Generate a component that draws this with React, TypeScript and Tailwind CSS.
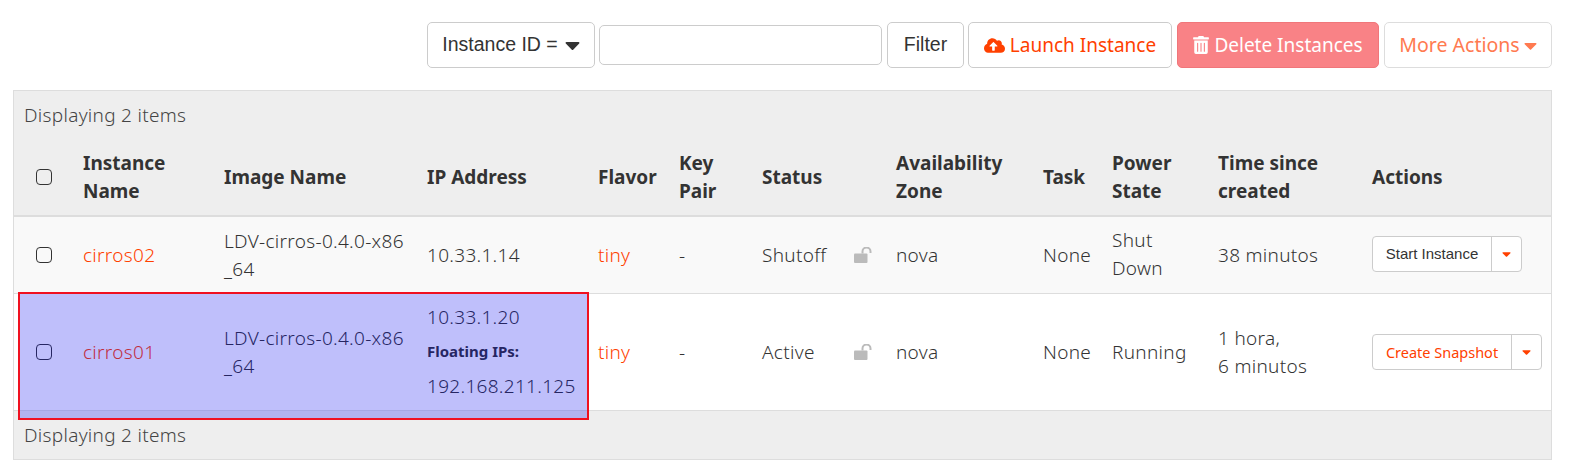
import React from 'react';
import { FaCaretDown, FaCloudUploadAlt, FaTrashAlt } from 'react-icons/fa';

const ubuntu = "font-['Noto_Sans',sans-serif]";
const arial = "font-['Liberation_Sans',sans-serif]";

const th = 'px-[10px] py-0 text-left align-middle font-bold text-[19px] leading-[28px] text-[#333]';
const td = 'px-[10px] py-0 align-middle text-[19px] font-light tracking-[0.3px] leading-[28px] border-t border-[#ddd]';

function Check() {
  return <span className="ml-[12px] block h-[16px] w-[16px] rounded-[4px] border-[1.5px] border-[#333]" />;
}

function Lock() {
  return (
    <svg viewBox="0 0 19 16" className="mr-[3px] h-[16px] w-[19px] text-[#bbb]">
      <rect x="0" y="6.5" width="13.5" height="9.5" rx="1" fill="currentColor" />
      <path d="M8.5 6.5V4.5a4 4 0 0 1 8 0V6" fill="none" stroke="currentColor" strokeWidth="2" />
    </svg>
  );
}

function Toolbar() {
  return (
    <div className="flex justify-end items-center pt-[22px] pr-[19px] h-[68px]">
      <button className={`${arial} flex items-center justify-center gap-[7px] w-[168px] h-[46px] rounded-[5px] border border-[#ccc] bg-white text-[19.5px] text-[#333]`}>
        Instance ID = <FaCaretDown className="h-[24px] w-[15px]" />
      </button>
      <div className="ml-[4px] w-[283px] h-[40px] rounded-[5px] border border-[#ccc] bg-white" />
      <button className={`${arial} ml-[5px] w-[77px] h-[46px] rounded-[5px] border border-[#ccc] bg-white text-[19.5px] text-[#333]`}>Filter</button>
      <button className={`${ubuntu} ml-[4px] flex items-center justify-center gap-[5px] w-[204px] h-[46px] rounded-[5px] border border-[#ccc] bg-white text-[19px] text-[#ff4000]`}>
        <FaCloudUploadAlt className="h-[19px] w-[21px]" /> Launch Instance
      </button>
      <button className={`${ubuntu} ml-[5px] flex items-center justify-center gap-[5px] w-[202px] h-[46px] rounded-[5px] border border-[#f0767a] bg-[#f98286] text-[19px] text-white`}>
        <FaTrashAlt className="h-[18px] w-[16px]" /> Delete Instances
      </button>
      <button className={`${ubuntu} ml-[5px] flex items-center justify-center gap-[4px] w-[168px] h-[46px] rounded-[5px] border border-[#ddd] bg-white text-[19.5px] text-[#ff7a50]`}>
        More Actions <FaCaretDown className="h-[21px] w-[13px]" />
      </button>
    </div>
  );
}

function ActionButton({ label, color, width, font }: { label: string; color: string; width: string; font: string }) {
  return (
    <div className={`flex h-[36px] ${width} rounded-[4px] border border-[#ccc] bg-white tracking-normal font-normal`}>
      <span className={`flex flex-1 items-center justify-center whitespace-nowrap ${font} ${color}`}>{label}</span>
      <span className="flex w-[30px] items-center justify-center border-l border-[#ccc] text-[#ff4000]">
        <FaCaretDown className="h-[14px] w-[11px]" />
      </span>
    </div>
  );
}

export default function App() {
  return (
    <div className={`${ubuntu} relative h-[473px] w-[1571px] overflow-hidden bg-white text-[#333]`}>
      <Toolbar />
      <div className="ml-[13px] mt-[22px] w-[1539px] border border-[#ddd]">
        <table className="w-full table-fixed border-collapse">
          <colgroup>
            <col className="w-[59px]" />
            <col className="w-[141px]" />
            <col className="w-[203px]" />
            <col className="w-[171px]" />
            <col className="w-[81px]" />
            <col className="w-[83px]" />
            <col className="w-[134px]" />
            <col className="w-[147px]" />
            <col className="w-[69px]" />
            <col className="w-[106px]" />
            <col className="w-[154px]" />
            <col />
          </colgroup>
          <thead className="bg-[#eee]">
            <tr className="h-[48px]">
              <td colSpan={12} className="px-[10px] text-[19px] tracking-[0.3px] text-[#444] font-light align-middle">Displaying 2 items</td>
            </tr>
            <tr className="h-[77px] border-b-[2px] border-[#ddd]">
              <th className={th}><Check /></th>
              <th className={th}>Instance Name</th>
              <th className={th}>Image Name</th>
              <th className={th}>IP Address</th>
              <th className={th}>Flavor</th>
              <th className={th}>Key Pair</th>
              <th className={th}>Status</th>
              <th className={th}>Availability Zone</th>
              <th className={th}>Task</th>
              <th className={th}>Power State</th>
              <th className={th}>Time since created</th>
              <th className={th}>Actions</th>
            </tr>
          </thead>
          <tbody>
            <tr className="h-[77px] bg-[#f9f9f9]">
              <td className={td}><Check /></td>
              <td className={`${td} text-[#ff4000]`}>cirros02</td>
              <td className={`${td} whitespace-nowrap`}>LDV-cirros-0.4.0-x86<br />_64</td>
              <td className={td}>10.33.1.14</td>
              <td className={`${td} text-[#ff4000]`}>tiny</td>
              <td className={td}>-</td>
              <td className={td}>
                <div className="flex items-center justify-between">Shutoff<Lock /></div>
              </td>
              <td className={td}>nova</td>
              <td className={td}>None</td>
              <td className={`${td} pb-[2px]`}>Shut Down</td>
              <td className={td}>38 minutos</td>
              <td className={`${td} pb-[2px]`}><ActionButton label="Start Instance" color="text-[#333]" width="w-[150px]" font={`${arial} text-[15px]`} /></td>
            </tr>
            <tr className="h-[117px] bg-white">
              <td className={td}><Check /></td>
              <td className={`${td} text-[#ff4000]`}>cirros01</td>
              <td className={`${td} whitespace-nowrap`}>LDV-cirros-0.4.0-x86<br />_64</td>
              <td className={td}>
                <div>10.33.1.20</div>
                <div className="text-[15px] font-bold leading-[41px] tracking-normal">Floating IPs:</div>
                <div className="whitespace-nowrap">192.168.211.125</div>
              </td>
              <td className={`${td} text-[#ff4000]`}>tiny</td>
              <td className={td}>-</td>
              <td className={td}>
                <div className="flex items-center justify-between">Active<Lock /></div>
              </td>
              <td className={td}>nova</td>
              <td className={td}>None</td>
              <td className={td}>Running</td>
              <td className={td}>1 hora,<br />6 minutos</td>
              <td className={td}><ActionButton label="Create Snapshot" color="text-[#ff4000]" width="w-[170px]" font={`${ubuntu} text-[14.5px]`} /></td>
            </tr>
          </tbody>
          <tfoot className="bg-[#eee]">
            <tr className="h-[49px] border-t border-[#ddd]">
              <td colSpan={12} className="px-[10px] text-[19px] tracking-[0.3px] text-[#444] font-light align-middle">Displaying 2 items</td>
            </tr>
          </tfoot>
        </table>
      </div>
      {/* red selection box laid over the table */}
      <div className="absolute left-[18px] top-[292px] h-[128px] w-[571px] border-[2px] border-[#f01020] bg-[#0000f0]/25" />
    </div>
  );
}
